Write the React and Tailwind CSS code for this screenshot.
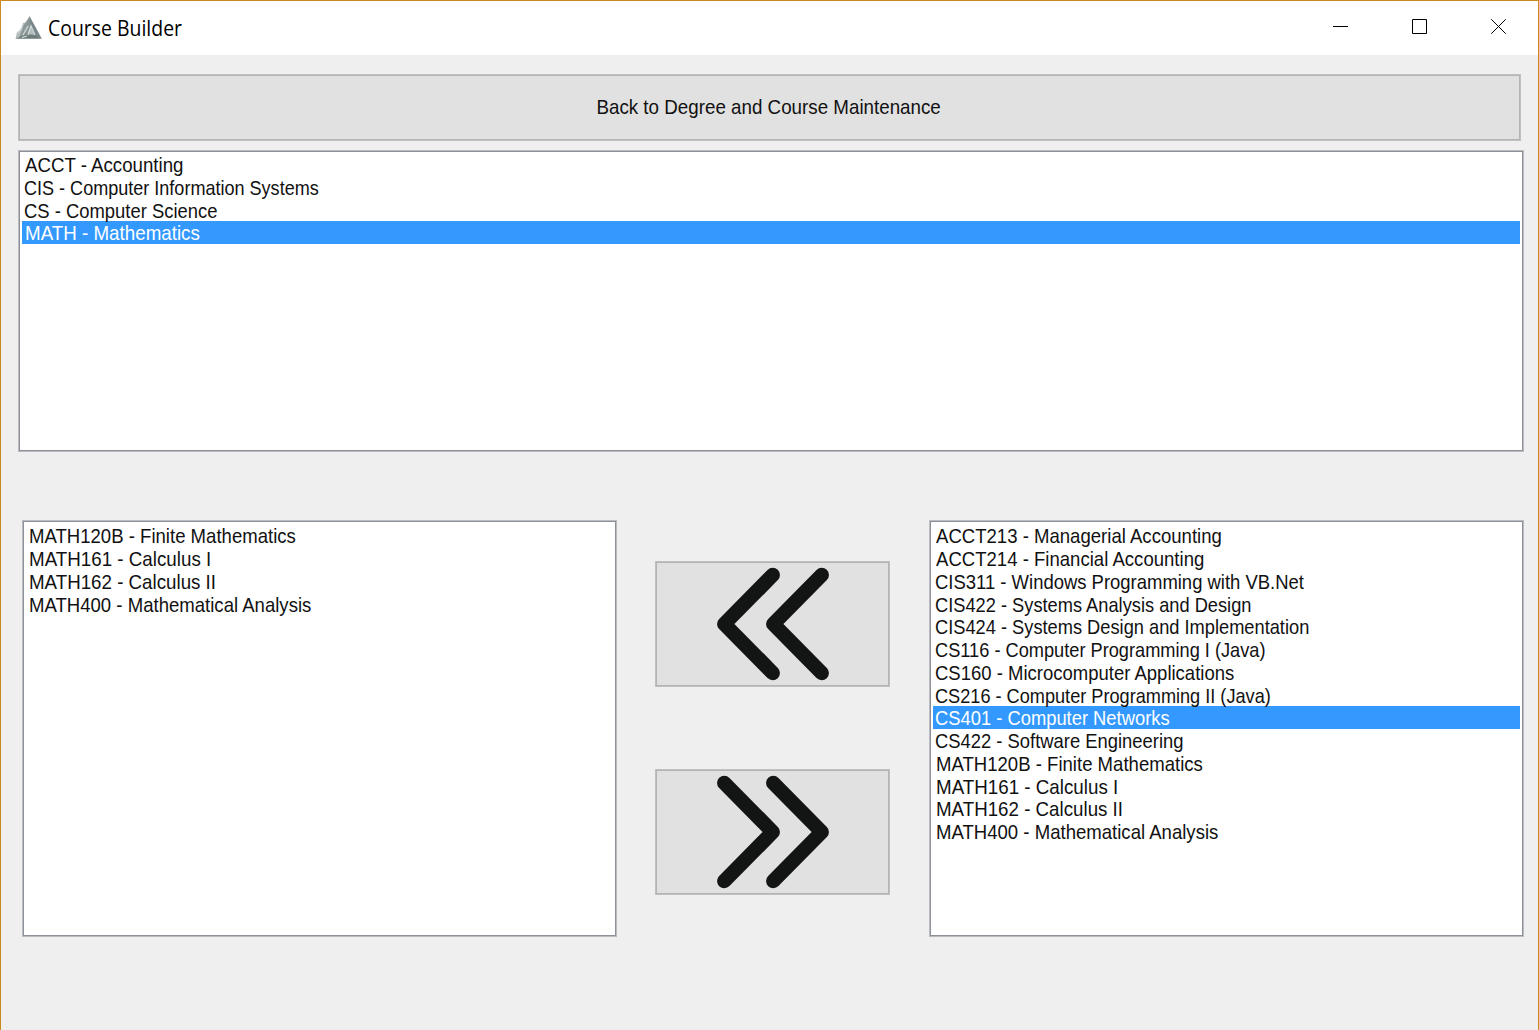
const subjects = [
  { label: "ACCT - Accounting", fit: "ml-[3px] scale-x-[0.889]" },
  { label: "CIS - Computer Information Systems", fit: "ml-[2px] scale-x-[0.859]" },
  { label: "CS - Computer Science", fit: "ml-[2px] scale-x-[0.877]" },
  { label: "MATH - Mathematics", fit: "ml-[3px] scale-x-[0.894]", selected: true },
];

const subjectCourses = [
  { label: "MATH120B - Finite Mathematics", fit: "ml-[3px] scale-x-[0.884]" },
  { label: "MATH161 - Calculus I", fit: "ml-[3px] scale-x-[0.894]" },
  { label: "MATH162 - Calculus II", fit: "ml-[3px] scale-x-[0.892]" },
  { label: "MATH400 - Mathematical Analysis", fit: "ml-[3px] scale-x-[0.884]" },
];

const allCourses = [
  { label: "ACCT213 - Managerial Accounting", fit: "ml-[3px] scale-x-[0.884]" },
  { label: "ACCT214 - Financial Accounting", fit: "ml-[3px] scale-x-[0.884]" },
  { label: "CIS311 - Windows Programming with VB.Net", fit: "ml-[2px] scale-x-[0.879]" },
  { label: "CIS422 - Systems Analysis and Design", fit: "ml-[2px] scale-x-[0.869]" },
  { label: "CIS424 - Systems Design and Implementation", fit: "ml-[2px] scale-x-[0.869]" },
  { label: "CS116 - Computer Programming I (Java)", fit: "ml-[2px] scale-x-[0.867]" },
  { label: "CS160 - Microcomputer Applications", fit: "ml-[2px] scale-x-[0.881]" },
  { label: "CS216 - Computer Programming II (Java)", fit: "ml-[2px] scale-x-[0.864]" },
  { label: "CS401 - Computer Networks", fit: "ml-[2px] scale-x-[0.874]", selected: true },
  { label: "CS422 - Software Engineering", fit: "ml-[2px] scale-x-[0.876]" },
  { label: "MATH120B - Finite Mathematics", fit: "ml-[3px] scale-x-[0.884]" },
  { label: "MATH161 - Calculus I", fit: "ml-[3px] scale-x-[0.894]" },
  { label: "MATH162 - Calculus II", fit: "ml-[3px] scale-x-[0.892]" },
  { label: "MATH400 - Mathematical Analysis", fit: "ml-[3px] scale-x-[0.884]" },
];

function AppIcon() {
  return (
    <svg className="ml-[14px] h-[26px] w-[28px] shrink-0" viewBox="0 0 28 26">
      <path d="M14.500 1 27 24H.5l1.500-7 4-2 2-7 4-1z" fill="#b3bbbb" />
      <path d="M14.500 1.500 9 10l-5 13 9-4 4-9z" fill="#8b9797" />
      <path d="m14.500 1.500 5 9 7 13-7-3-4-10z" fill="#78878a" />
      <path d="m1 23.500 11-4.500 8 1 6 3.500z" fill="#6c7d7b" />
      <path d="m8 20 5-9M13 20l3-9 4 9M3 18l4-6M7 22.500l5-1.500" stroke="#d5dbdb" strokeWidth="1.200" fill="none" />
    </svg>
  );
}

function TitleBar() {
  return (
    <header className="flex h-[54px] items-center bg-white">
      <AppIcon />
      <h1 className="ml-[5px] origin-left scale-x-[0.925] whitespace-nowrap font-['Open_Sans',sans-serif] text-[21px] leading-[54px] text-black">
        Course Builder
      </h1>
      <div className="ml-auto mr-[32px] flex h-full gap-[64px] pt-[18px]">
        {["M0 7.500h15", "M.5.500h14v14H.5z", "M.25.250l14.500 14.500M14.750.250.250 14.750"].map((d) => (
          <svg key={d} className="h-[15px] w-[15px]" viewBox="0 0 15 15" fill="none" stroke="#000">
            <path d={d} />
          </svg>
        ))}
      </div>
    </header>
  );
}

function ListBox({ items, className }) {
  return (
    <ul
      className={`border border-[#b9bbc0] bg-white pr-[3px] shadow-[inset_0_0_0_1px_#8d9198] ${className}`}
    >
      {items.map(({ label, fit, selected }, i) => (
        <li
          key={i}
          className={`flex h-[22.750px] text-[21px] leading-[23.500px] whitespace-nowrap ${
            selected ? "bg-[#3399ff] text-white" : "text-[#111]"
          }`}
        >
          <span className={`origin-left ${fit}`}>{label}</span>
        </li>
      ))}
    </ul>
  );
}

function MoveButton({ label, paths }) {
  return (
    <button
      aria-label={label}
      className="h-[126px] w-[235px] border border-[#c0c0c0] bg-[#e1e1e1] shadow-[inset_0_0_0_1px_#b4b4b4]"
    >
      <svg
        className="block h-[124px] w-[233px]"
        viewBox="0 0 233 124"
        fill="none"
        stroke="#131514"
        strokeWidth="14.500"
        strokeLinecap="round"
        strokeLinejoin="round"
      >
        <path d={paths} />
      </svg>
    </button>
  );
}

export default function App() {
  return (
    <div className="flex h-screen w-full flex-col overflow-hidden border-x border-t border-[#c98a1b] bg-[#efefef] font-['Liberation_Sans',Arial,sans-serif]">
      <TitleBar />
      <main className="flex flex-col pt-[19px] pl-[17px]">
        <button className="flex h-[67px] w-[1503px] items-center justify-center border border-[#c0c0c0] bg-[#e1e1e1] text-[21px] text-[#111] shadow-[inset_0_0_0_1px_#b4b4b4]">
          <span className="-ml-[2px] scale-x-[0.894] pb-[2px] whitespace-nowrap">Back to Degree and Course Maintenance</span>
        </button>
        <ListBox items={subjects} className="mt-[9px] h-[302px] w-[1506px] pt-[2px] pl-[3px]" />
        <div className="mt-[68px] ml-[4px] flex">
          <ListBox items={subjectCourses} className="h-[417px] w-[595px] pt-[3.250px] pl-[3px]" />
          <div className="mt-[41px] ml-[38px] flex flex-col gap-[82px]">
            <MoveButton label="Add" paths="M116.700 13 68.300 62l48.400 49M165.700 13l-48.400 49 48.400 49" />
            <MoveButton label="Remove" paths="M68.300 13l48.400 49-48.400 49M117.300 13l48.400 49-48.400 49" />
          </div>
          <ListBox items={allCourses} className="ml-[39px] h-[417px] w-[595px] pt-[3.250px] pl-[3px]" />
        </div>
      </main>
    </div>
  );
}
